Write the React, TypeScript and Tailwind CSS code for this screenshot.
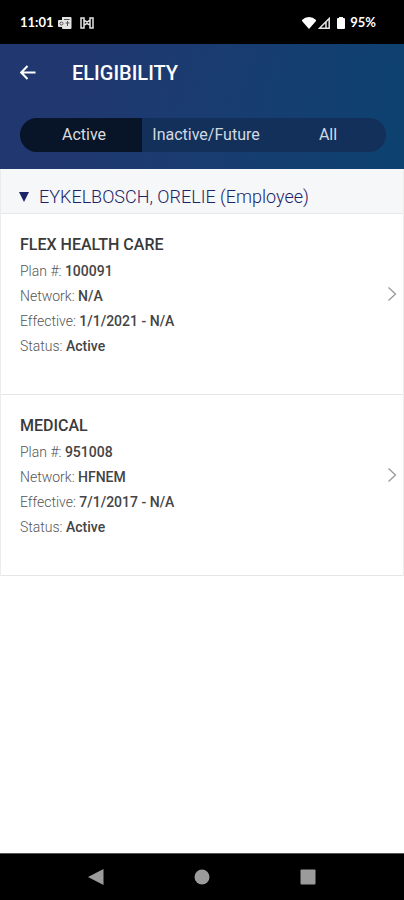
import { useState } from "react";

interface Plan {
  name: string;
  planNumber: string;
  network: string;
  effective: string;
  status: string;
}

const plans: Plan[] = [
  { name: "FLEX HEALTH CARE", planNumber: "100091", network: "N/A", effective: "1/1/2021 - N/A", status: "Active" },
  { name: "MEDICAL", planNumber: "951008", network: "HFNEM", effective: "7/1/2017 - N/A", status: "Active" },
];

const tabs = ["Active", "Inactive/Future", "All"];

function StatusBar() {
  return (
    <div className="flex h-11 items-center justify-between bg-black pl-5 pr-7 pt-0.5 text-white">
      <div className="flex items-center gap-1">
        <span className="font-[Lato,sans-serif] text-[13px] font-bold">11:01</span>
        <svg className="h-3 w-3.5" viewBox="0 0 14 12" aria-hidden="true">
          <path d="M4 0h8.500q1 0 1 1v10q0 1-1 1H5q-1 0-1-1v-1H1q-1 0-1-1V4q0-1 1-1h3z" fill="#e4e4e4" />
          <path d="M6 2.500h5.500M7.500 6h4M9.500 4v5" fill="none" stroke="#555" />
          <circle cx="3.500" cy="6.500" r="1.500" fill="none" stroke="#555" />
        </svg>
        <svg className="ml-1 h-3 w-3.5" viewBox="0 0 14 12" fill="none" stroke="#e4e4e4" strokeWidth="1.500" aria-hidden="true">
          <path d="M4 1H1v10h3V8l3-1.500L10 8v3h3V1h-3v2L7 5 4 3zM4 3v5M10 3v5" />
        </svg>
      </div>
      <div className="flex items-center">
        <svg className="h-3 w-3.5" viewBox="0 0 14 12" aria-hidden="true">
          <path d="M0 3Q3 0 7 0t7 3v1L7 12 0 4z" fill="#fff" />
        </svg>
        <svg className="ml-0.5 h-3 w-3" viewBox="0 0 12 12" aria-hidden="true">
          <path d="M1.500 11.200 11.200 1.500v9.700zM8 5v6" fill="none" stroke="#e4e4e4" strokeWidth="1.500" />
        </svg>
        <svg className="ml-1.5 mr-1 h-3 w-2.5" viewBox="0 0 10 12" aria-hidden="true">
          <path d="M3 0h4v1h1q1 0 1 1v9q0 1-1 1H2q-1 0-1-1V2q0-1 1-1h1z" fill="#fff" />
        </svg>
        <span className="font-[Lato,sans-serif] text-[13px] font-bold">95%</span>
      </div>
    </div>
  );
}

function Detail({ label, value }: { label: string; value: string }) {
  return (
    <p className="text-[14px] font-light leading-[25px] text-[#555]">
      {label}: <span className="font-medium text-[#444]">{value}</span>
    </p>
  );
}

function PlanCard({ plan }: { plan: Plan }) {
  return (
    <li className="border-b border-[#e6e6e6]">
      <button type="button" className="flex w-full items-start justify-between pb-[35px] pl-[19px] pr-1.5 pt-[19px] text-left">
        <div>
          <h2 className="mb-0.5 text-base font-medium leading-6 text-[#3a3a3a]">{plan.name}</h2>
          <Detail label="Plan #" value={plan.planNumber} />
          <Detail label="Network" value={plan.network} />
          <Detail label="Effective" value={plan.effective} />
          <Detail label="Status" value={plan.status} />
        </div>
        <svg className="mt-[53px] h-4 w-2.5" viewBox="0 0 10 16" fill="none" stroke="#999" strokeWidth="1.300" aria-hidden="true">
          <path d="M1.500 1.500 8.500 8l-7 6.500" />
        </svg>
      </button>
    </li>
  );
}

export default function App() {
  const [activeTab, setActiveTab] = useState("Active");
  const [expanded, setExpanded] = useState(true);

  return (
    <div className="flex min-h-screen flex-col bg-white font-[Roboto,sans-serif]">
      <StatusBar />

      <header className="bg-linear-[105deg] from-[#20386f] from-20% via-[#1a3c71] to-[#0c426f] pb-[17px] pl-5 pr-[18px]">
        <div className="flex h-[58px] items-center gap-9">
          <button type="button" aria-label="Back">
            <svg className="h-4 w-4" viewBox="0 0 16 16" fill="none" stroke="#fff" strokeWidth="2" aria-hidden="true">
              <path d="M15.500 7.500H1.500M7.500 1 1.200 7.500l6.300 6.500" />
            </svg>
          </button>
          <h1 className="text-xl font-medium text-white">ELIGIBILITY</h1>
        </div>
        <div className="mt-4 grid h-[34px] grid-cols-3 overflow-hidden rounded-full bg-[#13305a]">
          {tabs.map((tab) => (
            <button
              key={tab}
              type="button"
              aria-pressed={activeTab === tab}
              onClick={() => setActiveTab(tab)}
              className={
                activeTab === tab
                  ? "whitespace-nowrap bg-[#081428] pl-1.5 text-base text-[#dcdcdc]"
                  : "whitespace-nowrap pl-1.5 text-base text-[#d2d9e3]"
              }
            >
              {tab}
            </button>
          ))}
        </div>
      </header>

      <main className="flex-1">
        <section className="border-x border-[#ececec]">
          <button
            type="button"
            aria-expanded={expanded}
            onClick={() => setExpanded(!expanded)}
            className="flex h-[45px] w-full items-center gap-2.5 border-b border-[#e6e8ea] bg-[#f5f7f9] pl-[18px] pt-3 text-lg font-light text-[#1c2468]"
          >
            <svg className="h-2.5 w-2.5" viewBox="0 0 10 10" fill="#1c2468" aria-hidden="true">
              <path d={expanded ? "M0 0h10L5 10z" : "M0 0v10l10-5z"} />
            </svg>
            EYKELBOSCH, ORELIE (Employee)
          </button>
          {expanded && (
            <ul>
              {plans.map((plan) => (
                <PlanCard key={plan.planNumber} plan={plan} />
              ))}
            </ul>
          )}
        </section>
      </main>

      <nav className="flex h-[47px] items-center justify-center gap-[90px] border-t border-[#555] bg-black">
        <button type="button" aria-label="Back">
          <svg className="h-4 w-4" viewBox="0 0 16 16" fill="#9b9b9b" aria-hidden="true">
            <path d="M15.500 0v16L0 8z" />
          </svg>
        </button>
        <button type="button" aria-label="Home">
          <svg className="h-4 w-4" viewBox="0 0 16 16" fill="#9b9b9b" aria-hidden="true">
            <circle cx="8" cy="8" r="7.500" />
          </svg>
        </button>
        <button type="button" aria-label="Recent apps">
          <svg className="h-4 w-4" viewBox="0 0 16 16" fill="#9b9b9b" aria-hidden="true">
            <rect x="0.500" y="0.500" width="15" height="15" rx="1" />
          </svg>
        </button>
      </nav>
    </div>
  );
}
